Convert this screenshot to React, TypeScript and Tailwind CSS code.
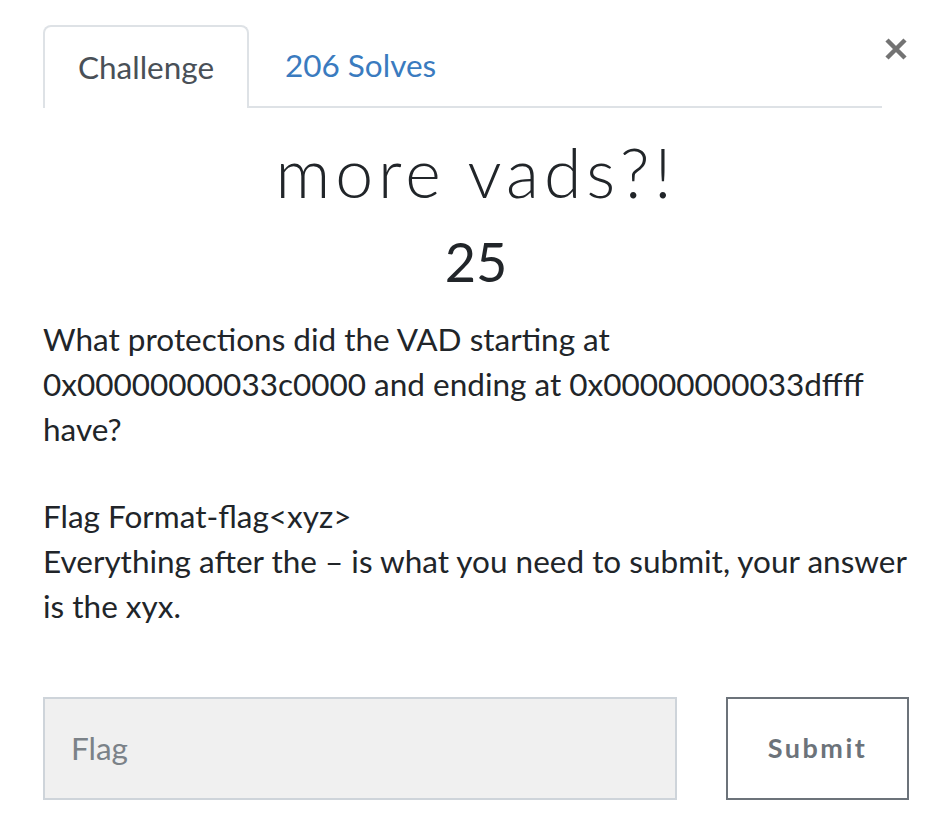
import React from "react";

export default function App() {
  return (
    <div className="relative w-[952px] h-[836px] bg-white text-[#212529]" style={{ fontFamily: "Lato, 'Open Sans', sans-serif" }}>
      <button className="absolute left-[883px] top-[36px] w-[26px] h-[26px] flex items-center justify-center text-[#737373]">
        <svg width="24" height="24" viewBox="0 0 24 24">
          <path d="M3 3 L21 21 M21 3 L3 21" stroke="#737373" strokeWidth="4.5" strokeLinecap="butt" />
        </svg>
      </button>
      <div className="px-[43px] pt-[25px]">
        <div className="flex w-[839px] border-b-2 border-[#dee2e6]">
          <div className="w-[206px] h-[83px] -mb-[2px] flex items-center justify-center border-2 border-b-0 border-[#dee2e6] rounded-t-[8px] bg-white text-[31.5px] text-[#495057]">
            Challenge
          </div>
          <div className="h-[81px] flex items-center pl-[36px] text-[31.5px] text-[#3a7bbf]">
            206 Solves
          </div>
        </div>
        <div className="text-center mt-[24px] text-[68px] leading-[80px] font-light tracking-[5px] text-[#212529]">
          more vads?!
        </div>
        <div className="text-center mt-[15px] text-[54px] leading-[70px] text-[#212529]">25</div>
        <div className="mt-[20px] text-[31.5px] leading-[45px] text-[#212529]">
          <p>What protections did the VAD starting at 0x00000000033c0000 and ending at 0x00000000033dffff have?</p>
          <p className="mt-[42px]">Flag Format-flag&lt;xyz&gt;<br />Everything after the – is what you need to submit, your answer is the xyx.</p>
        </div>
        <div className="flex mt-[68px] gap-[49px]">
          <div className="w-[634px] h-[103px] bg-[#f0f0f0] border-2 border-[#ced4da] flex items-center px-[26px] text-[31.5px] text-[#7b8288]">
            Flag
          </div>
          <div className="w-[183px] h-[103px] border-2 border-[#6c737a] flex items-center justify-center text-[27px] font-bold tracking-[2.5px] text-[#6c737a]">
            Submit
          </div>
        </div>
      </div>
    </div>
  );
}
